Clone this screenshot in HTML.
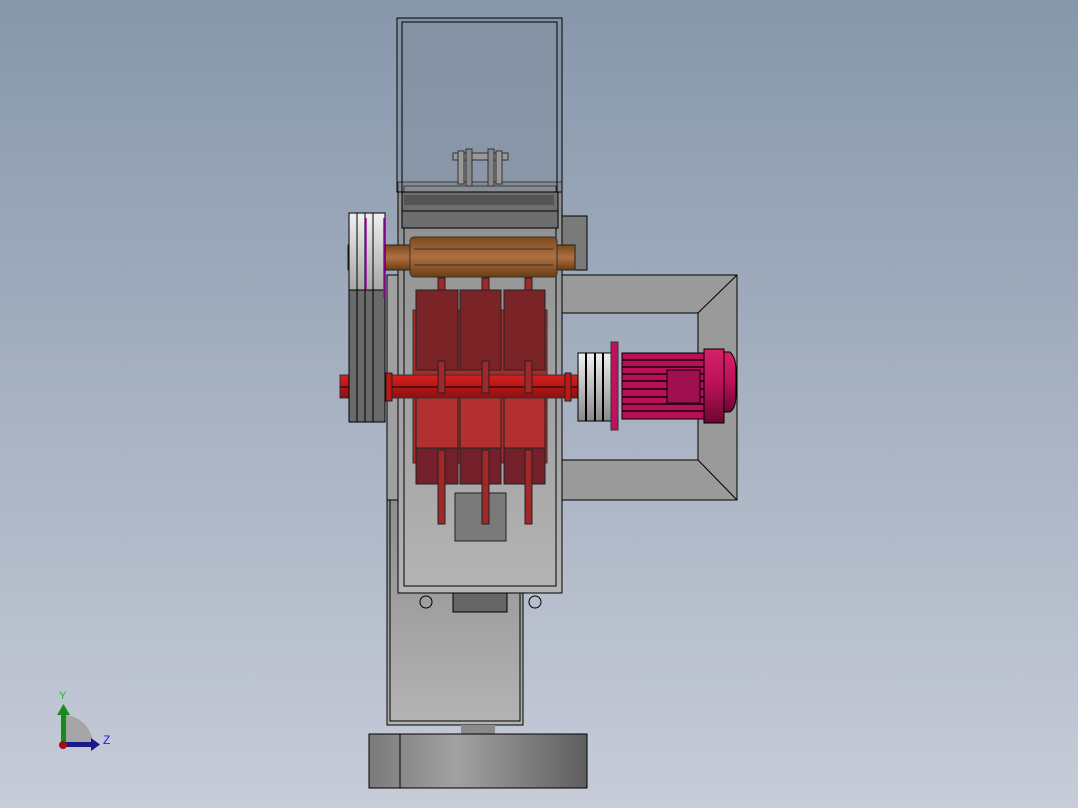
<!DOCTYPE html>
<html><head><meta charset="utf-8"><style>
html,body{margin:0;padding:0;width:1078px;height:808px;overflow:hidden}
svg{display:block}
</style></head><body>
<svg width="1078" height="808" viewBox="0 0 1078 808" xmlns="http://www.w3.org/2000/svg" font-family="Liberation Sans, sans-serif">
<defs>
<linearGradient id="bg" x1="0" y1="0" x2="0" y2="1"><stop offset="0" stop-color="#8797ab"/><stop offset="1" stop-color="#c7ccd8"/></linearGradient>
<linearGradient id="body" x1="0" y1="0" x2="0" y2="1"><stop offset="0" stop-color="#8e8e8e"/><stop offset="1" stop-color="#b4b4b4"/></linearGradient>
<linearGradient id="base" x1="0" y1="0" x2="1" y2="0"><stop offset="0" stop-color="#7a7a7a"/><stop offset="0.4" stop-color="#a2a2a2"/><stop offset="1" stop-color="#5e5e5e"/></linearGradient>
<linearGradient id="brown" x1="0" y1="0" x2="0" y2="1"><stop offset="0" stop-color="#7a4a1c"/><stop offset="0.5" stop-color="#b07040"/><stop offset="1" stop-color="#6a3e14"/></linearGradient>
<linearGradient id="silver" x1="0" y1="0" x2="0" y2="1"><stop offset="0" stop-color="#f0f0f0"/><stop offset="1" stop-color="#8a8a8a"/></linearGradient>
<linearGradient id="shaft" x1="0" y1="0" x2="0" y2="1"><stop offset="0" stop-color="#d82020"/><stop offset="0.5" stop-color="#b51818"/><stop offset="1" stop-color="#8a1010"/></linearGradient>
<linearGradient id="mag" x1="0" y1="0" x2="0" y2="1"><stop offset="0" stop-color="#d8206a"/><stop offset="0.5" stop-color="#b81058"/><stop offset="1" stop-color="#6a0830"/></linearGradient>
</defs>
<rect width="1078" height="808" fill="url(#bg)"/>

<path d="M562 275H737V500H562V460H698V313H562Z" fill="#9a9a9a" stroke="#000" stroke-width="1"/>
<path d="M698 313L737 275M698 460L737 500" stroke="#000" fill="none"/>
<rect x="562" y="216" width="25" height="54" fill="#7a7a7a" stroke="#000" stroke-width="1"/>

<rect x="387" y="275" width="14" height="450" fill="#a0a0a0" stroke="#000"/>
<rect x="387" y="500" width="136" height="225" fill="url(#body)" stroke="#000"/>
<rect x="390" y="500" width="130" height="221" fill="none" stroke="#000"/>
<rect x="461" y="725" width="34" height="9" fill="#8a8a8a"/>
<rect x="369" y="734" width="218" height="54" fill="url(#base)" stroke="#000"/>
<line x1="400" y1="734" x2="400" y2="788" stroke="#000"/>

<rect x="398" y="182" width="164" height="411" fill="url(#body)" stroke="#000"/>
<rect x="404" y="186" width="152" height="400" fill="none" stroke="#000"/>
<rect x="402" y="192" width="156" height="36" fill="#6e6e6e" stroke="#000"/>
<rect x="404" y="195" width="150" height="10" fill="#555"/>
<line x1="402" y1="211" x2="558" y2="211" stroke="#000"/>
<rect x="453" y="593" width="54" height="19" fill="#666" stroke="#000"/>
<circle cx="426" cy="602" r="6" fill="none" stroke="#000"/>
<circle cx="535" cy="602" r="6" fill="none" stroke="#000"/>
<rect x="455" y="493" width="51" height="48" fill="#7a7a7a" stroke="#222"/>

<rect x="397" y="18" width="165" height="174" fill="#7e8a98" fill-opacity="0.45" stroke="#000"/>
<rect x="402" y="22" width="155" height="170" fill="none" stroke="#000"/>
<rect x="453" y="153" width="55" height="7" fill="#999" stroke="#333"/>
<rect x="458" y="151" width="6" height="33" fill="#999" stroke="#333"/>
<rect x="496" y="151" width="6" height="33" fill="#999" stroke="#333"/>
<rect x="466" y="149" width="6" height="37" fill="#888" stroke="#333"/>
<rect x="488" y="149" width="6" height="37" fill="#888" stroke="#333"/>

<rect x="348" y="245" width="227" height="25" fill="url(#brown)" stroke="#222"/>
<rect x="410" y="237" width="147" height="40" rx="4" fill="url(#brown)" stroke="#333"/>
<line x1="414" y1="249" x2="553" y2="249" stroke="#333"/>
<line x1="414" y1="265" x2="553" y2="265" stroke="#333"/>

<rect x="413" y="310" width="134" height="153" fill="#a82a2a" stroke="#333"/>
<g fill="#a02828" stroke="#222">
<rect x="438" y="278" width="7" height="246"/>
<rect x="482" y="278" width="7" height="246"/>
<rect x="525" y="278" width="7" height="246"/>
</g>
<g stroke="#222" stroke-width="1">
<rect x="416" y="290" width="42" height="80" fill="#7a2428"/>
<rect x="460" y="290" width="41" height="80" fill="#7a2428"/>
<rect x="504" y="290" width="41" height="80" fill="#7a2428"/>
<rect x="416" y="398" width="42" height="50" fill="#b33030"/>
<rect x="460" y="398" width="41" height="50" fill="#b33030"/>
<rect x="504" y="398" width="41" height="50" fill="#b33030"/>
<rect x="416" y="448" width="42" height="36" fill="#74202a"/>
<rect x="460" y="448" width="41" height="36" fill="#74202a"/>
<rect x="504" y="448" width="41" height="36" fill="#74202a"/>
</g>
<rect x="340" y="375" width="238" height="23" fill="url(#shaft)" stroke="#333"/>
<line x1="340" y1="387" x2="578" y2="387" stroke="#000"/>
<g fill="#a02828" stroke="#222">
<rect x="438" y="361" width="7" height="32"/>
<rect x="482" y="361" width="7" height="32"/>
<rect x="525" y="361" width="7" height="32"/>
<rect x="438" y="450" width="7" height="74"/>
<rect x="482" y="450" width="7" height="74"/>
<rect x="525" y="450" width="7" height="74"/>
</g>
<rect x="386" y="373" width="6" height="28" fill="#c01818" stroke="#222"/>
<rect x="565" y="373" width="6" height="28" fill="#c01818" stroke="#222"/>

<rect x="349" y="213" width="36" height="107" fill="url(#silver)" stroke="#000"/>
<rect x="349" y="290" width="36" height="132" fill="#6a6a6a" stroke="#000"/>
<line x1="357" y1="213" x2="357" y2="422" stroke="#000"/>
<line x1="365" y1="213" x2="365" y2="422" stroke="#000"/>
<line x1="373" y1="213" x2="373" y2="422" stroke="#000"/>
<line x1="366" y1="218" x2="366" y2="290" stroke="#b000b0" stroke-width="1.5"/>
<line x1="384" y1="218" x2="384" y2="298" stroke="#b000b0" stroke-width="1.5"/>

<rect x="578" y="353" width="34" height="68" fill="url(#silver)" stroke="#000"/>
<line x1="586" y1="353" x2="586" y2="421" stroke="#000" stroke-width="2"/>
<line x1="595" y1="353" x2="595" y2="421" stroke="#000" stroke-width="2"/>
<line x1="603" y1="353" x2="603" y2="421" stroke="#000" stroke-width="2"/>
<rect x="611" y="342" width="7" height="88" fill="#c01060" stroke="#333"/>
<rect x="622" y="353" width="83" height="66" fill="#b81058" stroke="#000"/>
<g stroke="#3a0018" stroke-width="2">
<line x1="622" y1="360" x2="705" y2="360"/><line x1="622" y1="367" x2="705" y2="367"/>
<line x1="622" y1="374" x2="705" y2="374"/><line x1="622" y1="381" x2="705" y2="381"/>
<line x1="622" y1="389" x2="705" y2="389"/><line x1="622" y1="397" x2="705" y2="397"/>
<line x1="622" y1="404" x2="705" y2="404"/><line x1="622" y1="411" x2="705" y2="411"/>
</g>
<rect x="667" y="370" width="33" height="33" fill="#a01050" stroke="#000"/>
<rect x="704" y="349" width="20" height="74" fill="url(#mag)" stroke="#000"/>
<path d="M724 352H730Q736 358 736 370V395Q736 408 730 412H724Z" fill="url(#mag)" stroke="#000"/>

<path d="M63 747V715A30 30 0 0 1 93 745Z" fill="#a6a6a8"/>
<rect x="61" y="713" width="5" height="34" fill="#1a8a1a"/>
<path d="M57 715L63.5 704L70 715Z" fill="#1a8a1a"/>
<rect x="63" y="742" width="28" height="5" fill="#1a1a8a"/>
<path d="M91 738L100 744.5L91 751Z" fill="#1a1a8a"/>
<circle cx="63" cy="745" r="4" fill="#a01010"/>
<text x="59" y="699" font-size="11" fill="#20c020">Y</text>
<text x="103" y="744" font-size="12" fill="#2020e0">Z</text>
</svg>
</body></html>
